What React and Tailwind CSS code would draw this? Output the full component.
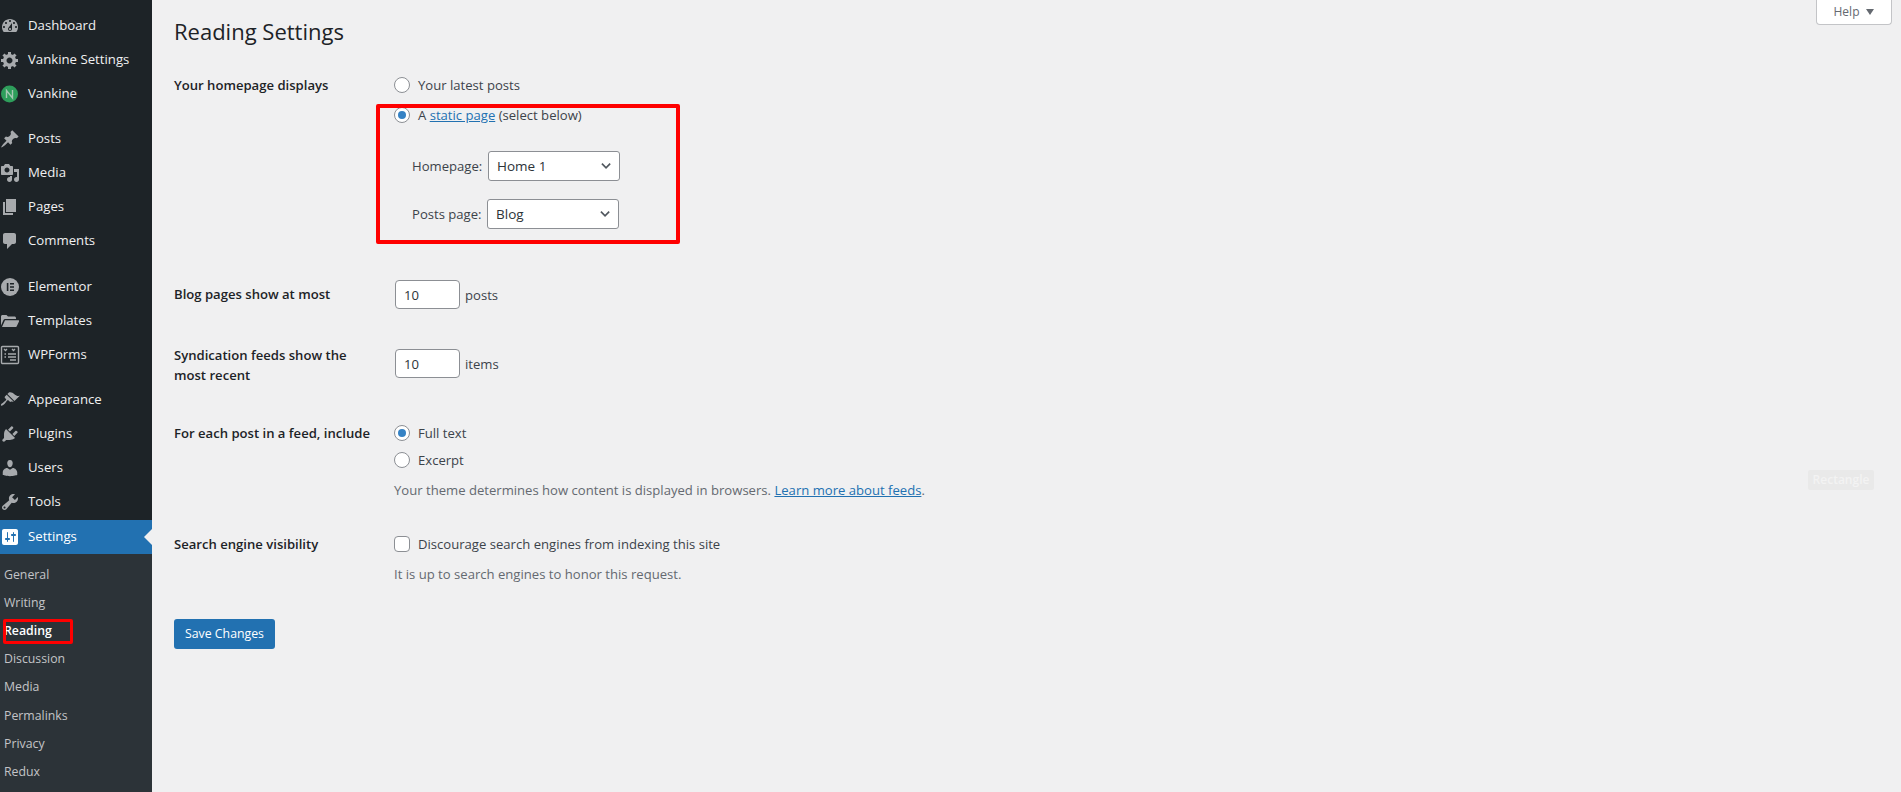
import React from 'react';

// dashicons paths
const icons = {
  dashboard: 'M3.76 16h12.48c1.1-1.37 1.76-3.11 1.76-5 0-4.42-3.58-8-8-8s-8 3.58-8 8c0 1.89.66 3.63 1.76 5zM10 4c.55 0 1 .45 1 1s-.45 1-1 1-1-.45-1-1 .45-1 1-1zM6 6c.55 0 1 .45 1 1s-.45 1-1 1-1-.45-1-1 .45-1 1-1zm8 0c.55 0 1 .45 1 1s-.45 1-1 1-1-.45-1-1 .45-1 1-1zm-5.37 5.55L12 7v6c0 1.1-.9 2-2 2s-2-.9-2-2c0-.57.24-1.08.63-1.45zM4 10c.55 0 1 .45 1 1s-.45 1-1 1-1-.45-1-1 .45-1 1-1zm12 0c.55 0 1 .45 1 1s-.45 1-1 1-1-.45-1-1 .45-1 1-1zm-5 3c0-.55-.45-1-1-1s-1 .45-1 1 .45 1 1 1 1-.45 1-1z',
  gear: 'M18 12h-2.18c-.17.7-.44 1.35-.81 1.93l1.54 1.54-2.1 2.1-1.54-1.54c-.58.36-1.23.63-1.91.79V19H8v-2.18c-.68-.16-1.33-.43-1.91-.79l-1.54 1.54-2.12-2.12 1.54-1.54c-.36-.58-.63-1.23-.79-1.91H1V9.03h2.17c.16-.7.44-1.35.8-1.94L2.43 5.55l2.1-2.1 1.54 1.54c.58-.37 1.24-.64 1.93-.81V2h3v2.18c.68.16 1.33.43 1.91.79l1.54-1.54 2.12 2.12-1.54 1.54c.36.59.64 1.24.8 1.94H18V12zm-8.5 1.5c1.66 0 3-1.34 3-3s-1.34-3-3-3-3 1.34-3 3 1.34 3 3 3z',
  post: 'M10.44 3.02l1.82-1.82 6.36 6.35-1.83 1.82c-1.05-.68-2.48-.57-3.41.36l-.75.75c-.92.93-1.04 2.35-.35 3.41l-1.83 1.82-2.41-2.41-2.8 2.79c-.42.42-3.38 2.71-3.8 2.29s1.86-3.39 2.28-3.81l2.79-2.79L4.1 9.36l1.83-1.82c1.05.69 2.48.57 3.4-.36l.75-.75c.93-.92 1.05-2.35.36-3.41z',
  media: 'M13 11V4c0-.55-.45-1-1-1h-1.67L9 1H5L3.67 3H2c-.55 0-1 .45-1 1v7c0 .55.45 1 1 1h10c.55 0 1-.45 1-1zM7 4.5c1.38 0 2.5 1.12 2.5 2.5S8.38 9.5 7 9.5 4.5 8.38 4.5 7 5.62 4.5 7 4.5zM14 6h5v10.5c0 1.38-1.12 2.5-2.5 2.5S14 17.88 14 16.5s1.12-2.5 2.5-2.5c.17 0 .34.02.5.05V9h-3V6zm-4 8.05V13h2v3.5c0 1.38-1.12 2.5-2.5 2.5S7 17.88 7 16.5 8.12 14 9.5 14c.17 0 .34.02.5.05z',
  page: 'M6 15V2h10v13H6zm-1 1h8v2H3V5h2v11z',
  comments: 'M5 2h9c1.1 0 2 .9 2 2v7c0 1.1-.9 2-2 2h-2l-5 5v-5H5c-1.1 0-2-.9-2-2V4c0-1.1.9-2 2-2z',
  folder: 'M1 5.5C1 4.7 1.7 4 2.5 4h4L8 5.5h6.5c.8 0 1.5.7 1.5 1.5v1H5.2c-.8 0-1.4.4-1.7 1.1L1 14.5V5.5zM5 9.2h13.2c.7 0 1.1.6.8 1.2l-2.4 5c-.2.4-.6.6-1 .6H2z',
  appearance: 'M14.48 11.06L7.41 3.99l1.5-1.5c.5-.56 2.3-.47 3.51.32 1.21.8 1.43 1.28 2.91 2.1 1.18.64 2.45 1.26 4.45.85zm-.71.71L6.7 4.7 4.93 6.47c-.39.39-.39 1.02 0 1.41l1.06 1.06c.39.39.39 1.03 0 1.42-.6.6-1.43 1.11-2.21 1.69-.35.26-.7.53-1.01.84C1.43 13.23.4 14.75 1.1 15.45c.7.7 2.21-.33 3.55-1.67.31-.31.58-.66.84-1.01.58-.78 1.09-1.61 1.69-2.21.39-.39 1.02-.39 1.41 0l1.06 1.06c.39.39 1.02.39 1.41 0z',
  plugins: 'M13.11 4.36L9.87 7.6 8 5.73l3.24-3.24c.35-.34 1.05-.2 1.56.32.52.51.66 1.21.31 1.55zm-8 1.77l.91-1.12 9.01 9.01-1.19.84c-.71.71-2.63 1.16-3.82 1.16H6.14L4.9 17.26c-.59.59-1.54.59-2.12 0-.59-.58-.59-1.53 0-2.12l1.24-1.24v-3.88c0-1.13.4-3.19 1.09-3.89zm7.26 3.97l3.24-3.24c.34-.35 1.04-.21 1.55.31.52.51.66 1.21.31 1.55l-3.24 3.25z',
  users: 'M10 9.25c-2.27 0-2.73-3.44-2.73-3.44C7 4.02 7.82 2 9.97 2c2.16 0 2.98 2.02 2.71 3.81 0 0-.41 3.44-2.68 3.44zm0 2.57L12.72 10c2.39 0 4.52 2.33 4.52 4.53v2.49s-3.65 1.13-7.24 1.13c-3.65 0-7.24-1.13-7.24-1.13v-2.49c0-2.25 1.94-4.48 4.47-4.48z',
  tools: 'M16.68 9.77c-1.34 1.34-3.3 1.67-4.95.99l-5.41 6.52c-.99.99-2.59.99-3.58 0s-.99-2.59 0-3.57l6.52-5.42c-.68-1.65-.35-3.61.99-4.95 1.28-1.28 3.12-1.62 4.72-1.06l-2.89 2.89 2.82 2.82 2.86-2.87c.53 1.58.18 3.39-1.08 4.65zM3.81 16.21c.4.39 1.04.39 1.43 0 .4-.4.4-1.04 0-1.43-.39-.4-1.03-.4-1.43 0-.39.39-.39 1.03 0 1.43z',
  settings: 'M18 16V4c0-1.1-.9-2-2-2H4c-1.1 0-2 .9-2 2v12c0 1.1.9 2 2 2h12c1.1 0 2-.9 2-2zM8 11h1c.55 0 1 .45 1 1s-.45 1-1 1H8v1.5c0 .28-.22.5-.5.5s-.5-.22-.5-.5V13H6c-.55 0-1-.45-1-1s.45-1 1-1h1V5.5c0-.28.22-.5.5-.5s.5.22.5.5V11zm5-2h-1c-.55 0-1-.45-1-1s.45-1 1-1h1V5.5c0-.28.22-.5.5-.5s.5.22.5.5V7h1c.55 0 1 .45 1 1s-.45 1-1 1h-1v5.5c0 .28-.22.5-.5.5s-.5-.22-.5-.5V9z',
};

const DashIcon = ({ name, className = 'text-[#a7aaad]' }) => (
  <svg viewBox="0 0 20 20" className={`w-5 h-5 ${className}`} fill="currentColor">
    <path d={icons[name]} />
  </svg>
);

const VankineIcon = () => (
  <svg viewBox="0 0 20 20" className="w-5 h-5">
    <circle cx="9.5" cy="10" r="8.5" fill="#2e9e5b" />
    <path d="M6.5 14V6.5L12.5 14V6" fill="none" stroke="#a7c9b4" strokeWidth="1.4" />
  </svg>
);

const ElementorIcon = () => (
  <svg viewBox="0 0 20 20" className="w-5 h-5">
    <circle cx="10" cy="10" r="9" fill="#a7aaad" />
    <path d="M6.8 6h1.6v8H6.8zM10 6h4v1.6h-4zM10 9.2h4v1.6h-4zM10 12.4h4V14h-4z" fill="#1d2327" />
  </svg>
);

const FormsIcon = () => (
  <svg viewBox="0 0 20 20" className="w-5 h-5" fill="none" stroke="#a7aaad">
    <rect x="1.5" y="1.5" width="17" height="17" rx="1" strokeWidth="1.4" />
    <path d="M4 4l1.5 1.5L7 4M12 4l1.5 1.5L15 4M4.5 9h1.5M8 9h8M4.5 12h1.5M8 12h8M10 15h6" strokeWidth="1.3" />
  </svg>
);

const Chevron = () => (
  <svg viewBox="0 0 12 8" className="w-[11px] h-2" fill="none" stroke="#50575e" strokeWidth="1.8">
    <path d="M1 1.5l4.5 4.5L10 1.5" />
  </svg>
);

const MenuItem = ({ icon, label }) => (
  <div className="h-[34px] flex items-center">
    <div className="w-[28px] shrink-0 flex">{icon}</div>
    <span className="text-[13.2px] text-[#f0f0f1]">{label}</span>
  </div>
);

const groups = [
  [
    [<DashIcon name="dashboard" />, 'Dashboard'],
    [<DashIcon name="gear" />, 'Vankine Settings'],
    [<VankineIcon />, 'Vankine'],
  ],
  [
    [<DashIcon name="post" />, 'Posts'],
    [<DashIcon name="media" />, 'Media'],
    [<DashIcon name="page" />, 'Pages'],
    [<DashIcon name="comments" />, 'Comments'],
  ],
  [
    [<ElementorIcon />, 'Elementor'],
    [<DashIcon name="folder" />, 'Templates'],
    [<FormsIcon />, 'WPForms'],
  ],
  [
    [<DashIcon name="appearance" />, 'Appearance'],
    [<DashIcon name="plugins" />, 'Plugins'],
    [<DashIcon name="users" />, 'Users'],
    [<DashIcon name="tools" />, 'Tools'],
  ],
];

const submenu = ['General', 'Writing', 'Reading', 'Discussion', 'Media', 'Permalinks', 'Privacy', 'Redux'];

const Sidebar = () => (
  <aside className="w-[152px] shrink-0 bg-[#1d2327] pt-[9px] overflow-hidden">
    <div>
      {groups.map((group, i) => (
        <div key={i} className="mb-[11px] nth-2:mb-[12px] last:mb-px">
          {group.map(([icon, label]) => (
            <MenuItem key={label} icon={icon} label={label} />
          ))}
        </div>
      ))}
    </div>
    <div className="relative h-[34px] flex items-center bg-[#2271b1]">
      <div className="w-[28px] shrink-0 flex">
        <DashIcon name="settings" className="text-white" />
      </div>
      <span className="text-[13.2px] text-white">Settings</span>
      <div className="absolute right-0 top-[9px] border-y-8 border-r-8 border-y-transparent border-r-[#f0f0f1]" />
    </div>
    <div className="bg-[#2c3338] h-[238px] pt-[7px] pl-1">
      {submenu.map((item) => (
        <div key={item} className="relative h-[28.15px] flex items-center text-[12.3px]">
          {item === 'Reading' ? (
            <>
              <span className="font-semibold text-white">{item}</span>
              <div className="absolute -left-px top-[2px] w-[70px] h-[25px] border-[3px] border-[#f00] rounded-[2px]" />
            </>
          ) : (
            <span className="text-[#c3c4c7]">{item}</span>
          )}
        </div>
      ))}
    </div>
  </aside>
);

const Radio = ({ checked, label }) => (
  <label className="h-5 flex items-center -ml-px">
    <span className="w-4 h-4 mr-2 rounded-full border border-[#8c8f94] bg-white flex items-center justify-center">
      {checked && <span className="w-2 h-2 rounded-full bg-[#3582c4]" />}
    </span>
    <span>{label}</span>
  </label>
);

const Select = ({ value }) => (
  <div className="w-[132px] h-[30px] pl-2 pr-[7px] flex items-center justify-between bg-white border border-[#8c8f94] rounded-[3px] text-[13.5px] text-[#2c3338]">
    <span>{value}</span>
    <Chevron />
  </div>
);

const NumberBox = ({ value }) => (
  <div className="w-[65px] h-[29px] pl-2 flex items-center bg-white border border-[#8c8f94] rounded-[4px] text-[#2c3338]">
    {value}
  </div>
);

const Row = ({ label, className, children }) => (
  <div className={`grid grid-cols-[221px_1fr] ${className}`}>
    <div className="pr-5 font-semibold text-[#1d2327] leading-5">{label}</div>
    <div>{children}</div>
  </div>
);

const Description = ({ children }) => <p className="mt-[10px] h-5 -ml-px text-[13.1px] leading-5 text-[#646970]">{children}</p>;

const Main = () => (
  <main className="relative flex-1 pl-[22px] text-[13.1px] leading-5 text-[#3c434a]">
    <div className="absolute top-0 right-[9px] w-[76px] h-[25px] flex items-center justify-center gap-[7px] bg-white border border-t-0 border-[#c3c4c7] rounded-b-[4px] text-[12px] text-[#646970]">
      Help
      <span className="border-x-4 border-t-[6px] border-x-transparent border-t-[#646970]" />
    </div>
    <div className="absolute left-[1656px] top-[470px] w-[66px] h-5 flex items-center justify-center bg-[#e9e9e9] rounded-[2px] text-[12px] font-semibold text-[#f3f3f3]">
      Rectangle
    </div>

    <h1 className="mt-[16px] text-[22px] leading-[30px] text-[#1d2327]">Reading Settings</h1>

    <Row label="Your homepage displays" className="mt-[29px]">
      <Radio label="Your latest posts" />
      <div className="mt-[10px]">
        <Radio
          checked
          label={
            <>
              A <a className="text-[#2271b1] underline">static page</a> (select below)
            </>
          }
        />
      </div>
      <div className="mt-[26px] ml-[17px] flex items-center">
        <span className="w-[76px] pb-px">Homepage:</span>
        <Select value="Home 1" />
      </div>
      <div className="mt-[18px] ml-[17px] flex items-center">
        <span className="w-[75px] pb-px">Posts page:</span>
        <Select value="Blog" />
      </div>
    </Row>

    <Row label={<span className="block pt-1">Blog pages show at most</span>} className="mt-[51px]">
      <div className="flex items-center gap-[5px]">
        <NumberBox value="10" />
        posts
      </div>
    </Row>

    <Row label="Syndication feeds show the most recent" className="mt-[36px]">
      <div className="mt-1 flex items-center gap-[5px]">
        <NumberBox value="10" />
        items
      </div>
    </Row>

    <Row label="For each post in a feed, include" className="mt-[38px]">
      <Radio checked label="Full text" />
      <div className="mt-[7px]">
        <Radio label="Excerpt" />
      </div>
      <Description>
        Your theme determines how content is displayed in browsers.{' '}
        <a className="text-[#2271b1] underline">Learn more about feeds</a>.
      </Description>
    </Row>

    <Row label="Search engine visibility" className="mt-[34px]">
      <label className="h-5 flex items-center -ml-px">
        <span className="w-4 h-4 mr-2 rounded-[4px] border border-[#8c8f94] bg-white" />
        Discourage search engines from indexing this site
      </label>
      <Description>It is up to search engines to honor this request.</Description>
    </Row>

    <button className="mt-[35px] w-[101px] h-[30px] bg-[#2271b1] rounded-[3px] text-[12.3px] text-white">
      Save Changes
    </button>

    {/* red annotation drawn over the form */}
    <div className="absolute left-[224px] top-[104px] w-[304px] h-[140px] border-[4px] border-[#f00] rounded-[2px]" />
  </main>
);

export default function App() {
  return (
    <div className="h-[792px] flex overflow-hidden bg-[#f0f0f1] font-['Open_Sans','Noto_Sans',sans-serif]">
      <Sidebar />
      <Main />
    </div>
  );
}
